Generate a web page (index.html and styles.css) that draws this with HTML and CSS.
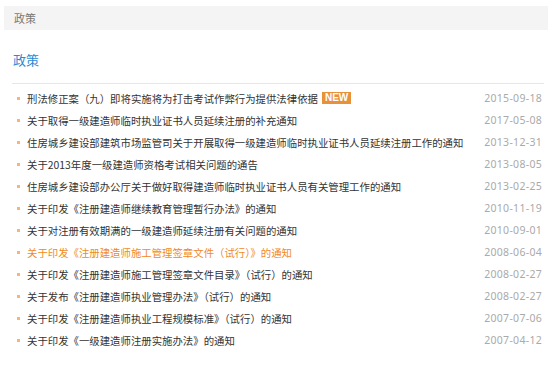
FILE: index.html
```html
<!DOCTYPE html>
<html lang="zh-CN">
<head>
  <meta charset="UTF-8" />
  <title>政策</title>
  <link rel="stylesheet" href="styles.css">
</head>
<body>
  <div class="crumb">政策</div>

  <div class="panel">
    <h2 class="title">政策</h2>
    <ul class="news">
      <li><a href="#">刑法修正案（九）即将实施将为打击考试作弊行为提供法律依据</a><span class="new">NEW</span><span class="date">2015-09-18</span></li>
      <li><a href="#">关于取得一级建造师临时执业证书人员延续注册的补充通知</a><span class="date">2017-05-08</span></li>
      <li><a href="#">住房城乡建设部建筑市场监管司关于开展取得一级建造师临时执业证书人员延续注册工作的通知</a><span class="date">2013-12-31</span></li>
      <li><a href="#">关于2013年度一级建造师资格考试相关问题的通告</a><span class="date">2013-08-05</span></li>
      <li><a href="#">住房城乡建设部办公厅关于做好取得建造师临时执业证书人员有关管理工作的通知</a><span class="date">2013-02-25</span></li>
      <li><a href="#">关于印发《注册建造师继续教育管理暂行办法》的通知</a><span class="date">2010-11-19</span></li>
      <li><a href="#">关于对注册有效期满的一级建造师延续注册有关问题的通知</a><span class="date">2010-09-01</span></li>
      <li class="hover"><a href="#">关于印发《注册建造师施工管理签章文件（试行）》的通知</a><span class="date">2008-06-04</span></li>
      <li><a href="#">关于印发《注册建造师施工管理签章文件目录》（试行）的通知</a><span class="date">2008-02-27</span></li>
      <li><a href="#">关于发布《注册建造师执业管理办法》（试行）的通知</a><span class="date">2008-02-27</span></li>
      <li><a href="#">关于印发《注册建造师执业工程规模标准》（试行）的通知</a><span class="date">2007-07-06</span></li>
      <li><a href="#">关于印发《一级建造师注册实施办法》的通知</a><span class="date">2007-04-12</span></li>
    </ul>
  </div>
</body>
</html>
```

FILE: styles.css
```css
body {
  margin: 0;
  padding: 6px 6px 0 4px;
  background: #fff;
  font-family: "Noto Sans CJK SC", "Noto Sans", sans-serif;
  color: #333;
}
.crumb {
  height: 24px;
  line-height: 24px;
  padding-left: 10px;
  background: #f4f4f4;
  font-size: 11px;
  color: #777;
}
.panel {
  padding: 0 4px 0 8px;
}
.title {
  margin: 0;
  padding: 23px 0 0 1px;
  height: 30px;
  line-height: 14px;
  font-size: 13px;
  font-weight: normal;
  color: #2a8ad4;
  border-bottom: 1px solid #e6e6e6;
}
.news {
  list-style: none;
  margin: 0;
  padding: 3px 0 0 0;
}
.news li {
  display: flex;
  align-items: center;
  height: 22px;
  font-size: 10.4px;
  padding-left: 15px;
  position: relative;
}
.news li::before {
  content: "";
  position: absolute;
  left: 5px;
  top: 10px;
  width: 3px;
  height: 3px;
  background: #f5b67a;
}
.news a {
  color: #333;
  text-decoration: none;
}
.news li.hover a {
  color: #ef8a25;
}
.new {
  margin-left: 4px;
  padding: 0 3px;
  height: 12px;
  line-height: 12px;
  background: #e8913a;
  color: #fff;
  font-family: "Liberation Sans", Arial, sans-serif;
  font-weight: bold;
  font-size: 10px;
}
.date {
  margin-left: auto;
  padding-right: 2px;
  font-family: "Noto Sans", sans-serif;
  font-size: 10.5px;
  letter-spacing: 0.3px;
  color: #aaa;
}
```
